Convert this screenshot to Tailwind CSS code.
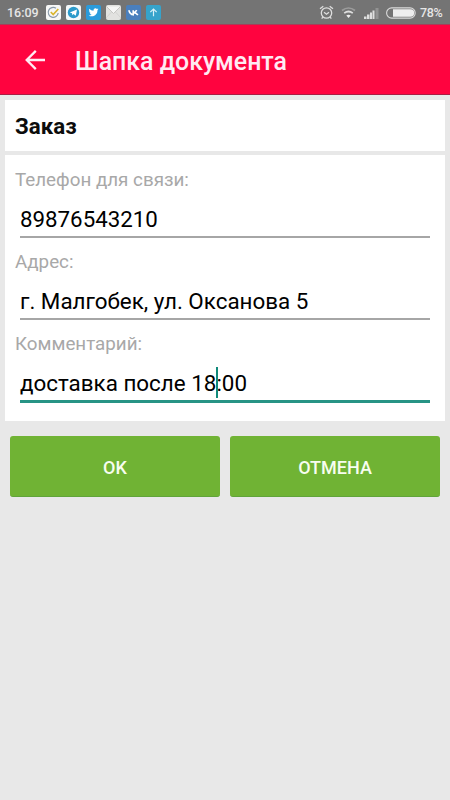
<!DOCTYPE html>
<html lang="ru">
<head>
<meta charset="utf-8">
<title>Шапка документа</title>
<script src="https://cdn.jsdelivr.net/npm/@tailwindcss/browser@4"></script>
</head>
<body class="w-[450px] h-[800px] overflow-hidden bg-[#e8e8e8] font-[Roboto,sans-serif] text-black">
<header>
  <div class="h-[25px] bg-[#747474] border-b border-[#a83d58] flex items-center pl-[7px] pr-[8px] text-[#e6e6e6] text-[12.500px] leading-none font-medium">
    <span class="w-[39px] pt-[2px] whitespace-nowrap">16:09</span>
    <div class="flex gap-[5px] pt-[1px]">
      <svg class="size-[15px]" viewBox="0 0 15 15"><rect width="15" height="15" rx="2" fill="#f7f7f7"/><path d="M10 3.2A5 5 0 1 0 12.2 8" fill="none" stroke="#8a9aaa" stroke-width="1.2"/><path d="M4.8 7l2.4 2.5L12.3 4" fill="none" stroke="#d9b52f" stroke-width="1.7"/></svg>
      <svg class="size-[15px]" viewBox="0 0 15 15"><rect width="15" height="15" rx="2" fill="#f4f8fa"/><circle cx="7.5" cy="7.5" r="5.7" fill="#2b9acb"/><path d="M3.8 7.4L11 4.6 9.8 10.7 7.5 9.1 6.3 10.3 6 8.3z" fill="#fff"/></svg>
      <svg class="size-[15px]" viewBox="0 0 15 15"><rect width="15" height="15" rx="2" fill="#2a9bdc"/><path transform="translate(2.1 2.1) scale(.45)" d="M23 4.6a9 9 0 0 1-2.5.7 4.4 4.4 0 0 0 2-2.4 9 9 0 0 1-2.9 1.1A4.5 4.5 0 0 0 12 8.100 12.700 12.700 0 0 1 2.700 3.400a4.500 4.500 0 0 0 1.400 6 4.500 4.500 0 0 1-2-.6 4.500 4.500 0 0 0 3.600 4.500 4.500 4.500 0 0 1-2 .1 4.500 4.500 0 0 0 4.200 3.100A9 9 0 0 1 1.200 18.400 12.700 12.700 0 0 0 8.100 20.400c8.300 0 13-7 12.700-13.400A9 9 0 0 0 23 4.600z" fill="#fff"/></svg>
      <svg class="size-[15px]" viewBox="0 0 15 15"><rect width="15" height="15" rx="2" fill="#e2e2e0"/><path d="M0 13L5.500 7M15 13L9.500 7" stroke="#cfcfcd" stroke-width=".8"/><path d="M.5 1.500L7.500 8.500 14.500 1.500" fill="#f7f7f7" stroke="#c2c2c0" stroke-width=".9"/></svg>
      <svg class="size-[15px]" viewBox="0 0 15 15"><rect width="15" height="15" rx="2" fill="#4a7fbd"/><path d="M2.800 5.200Q4 9.300 7.200 9.800V5.200M7.300 7.600Q9.600 7.400 10.700 5.200M7.600 7.600Q10.200 7.700 11.900 9.900" fill="none" stroke="#fff" stroke-width="1.600"/></svg>
      <svg class="size-[15px]" viewBox="0 0 15 15"><rect width="15" height="15" rx="2" fill="#36a3cb"/><path d="M7.500 11.300V4.200M4.300 7.200L7.500 4l3.200 3.200" fill="none" stroke="#d9f0f7" stroke-width="1.200"/></svg>
    </div>
    <div class="ml-auto flex items-center pt-[1px]">
      <svg class="w-[15px] h-[15px] mr-[7px]" viewBox="0 0 15 15" fill="none" stroke="#dedede" stroke-width="1.300"><circle cx="7.500" cy="8" r="5.200"/><path d="M1 3.800L4.300 1.200M14 3.800L10.700 1.200M3.800 12.200L2.700 13.600M11.200 12.200L12.300 13.600M5 7.200L7.500 9.200 10 7.200"/></svg>
      <svg class="w-[15px] h-[13px] mr-[8px]" viewBox="0 0 15 13" fill="none" stroke-width="1.700"><path d="M1 4.500Q7.500-.5 14 4.500" stroke="#9b9b9b"/><path d="M3.200 7.200Q7.500 3.800 11.800 7.200" stroke="#dedede"/><path d="M5.300 9.500Q7.500 8 9.700 9.500L7.500 12z" fill="#eee"/></svg>
      <svg class="w-[15px] h-[12px] mr-[7px]" viewBox="0 0 15 12"><path d="M0 9.500h2.500V12H0zM3 7.500h2.500V12H3zM6 5.500h2V12H6zM8.500 3.500h2V12h-2z" fill="#dedede"/><path d="M11.500 1h3v11h-3z" fill="#929292"/></svg>
      <svg class="w-[30px] h-[12px] mr-[4px]" viewBox="0 0 30 12"><rect x=".6" y=".9" width="28.600" height="10.200" rx="5.100" fill="none" stroke="#dadada" stroke-width="1.100"/><path d="M7 2.300H24.500a3.700 3.700 0 0 1 0 7.400H7z" fill="#eee"/></svg>
      <span class="w-[22px] pt-[1px] text-[12.500px] tracking-[-0.400px] whitespace-nowrap">78%</span>
    </div>
  </div>
  <div class="h-[70px] bg-[#ff033f] border-b border-[#a91d42] flex items-center pl-[25px] pt-[1px]">
    <svg class="w-[20px] h-[20px]" viewBox="0 0 20 20" fill="none" stroke="#ffeaf2" stroke-width="2.300"><path d="M20 10H2M10.800 .9L1.700 10l9.100 9.100"/></svg>
    <h1 class="ml-[30px] mt-[4px] text-[24.900px] leading-none font-medium text-[#ffeaf2] whitespace-nowrap">Шапка документа</h1>
  </div>
</header>
<main class="px-[5px] pt-[5px]">
  <h2 class="h-[51px] bg-white pl-[10px] flex items-center text-[22.300px] font-bold text-[#0c0c0c] pt-[2px]">Заказ</h2>
  <section class="mt-[4px] h-[266px] bg-white px-[10px] pt-[13px]">
    <div class="h-[82px]">
      <div class="h-[22px] leading-[24px] text-[18.800px] text-[#a8a8a8]">Телефон для связи:</div>
      <div class="mx-[5px] h-[48px] pt-[17px] leading-[25px] text-[22.300px] border-b-2 border-[#a6a6a6] whitespace-nowrap">89876543210</div>
    </div>
    <div class="h-[82px]">
      <div class="h-[22px] leading-[24px] text-[18.800px] text-[#a8a8a8]">Адрес:</div>
      <div class="mx-[5px] h-[48px] pt-[17px] leading-[25px] text-[22.400px] border-b-2 border-[#a6a6a6] whitespace-nowrap">г. Малгобек, ул. Оксанова 5</div>
    </div>
    <div class="h-[82px]">
      <div class="h-[22px] leading-[24px] text-[18.800px] text-[#a8a8a8]">Комментарий:</div>
      <div class="mx-[5px] h-[49px] pt-[17px] leading-[25px] text-[22.400px] border-b-3 border-[#279485] whitespace-nowrap">доставка после 18<span class="relative"><span class="absolute left-0 top-[-3px] w-[2px] h-[31px] bg-[#108a7b]"></span>:</span>00</div>
    </div>
  </section>
  <div class="mt-[15px] px-[5px] flex gap-[10px]">
    <button class="flex-1 h-[61px] rounded-[3px] bg-[#70b334] border-b border-[#60a43a] pt-[2px] text-[18px] font-medium text-[#f7fdef]">OK</button>
    <button class="flex-1 h-[61px] rounded-[3px] bg-[#70b334] border-b border-[#60a43a] pt-[2px] text-[18px] font-medium text-[#f7fdef]">ОТМЕНА</button>
  </div>
</main>
</body>
</html>
